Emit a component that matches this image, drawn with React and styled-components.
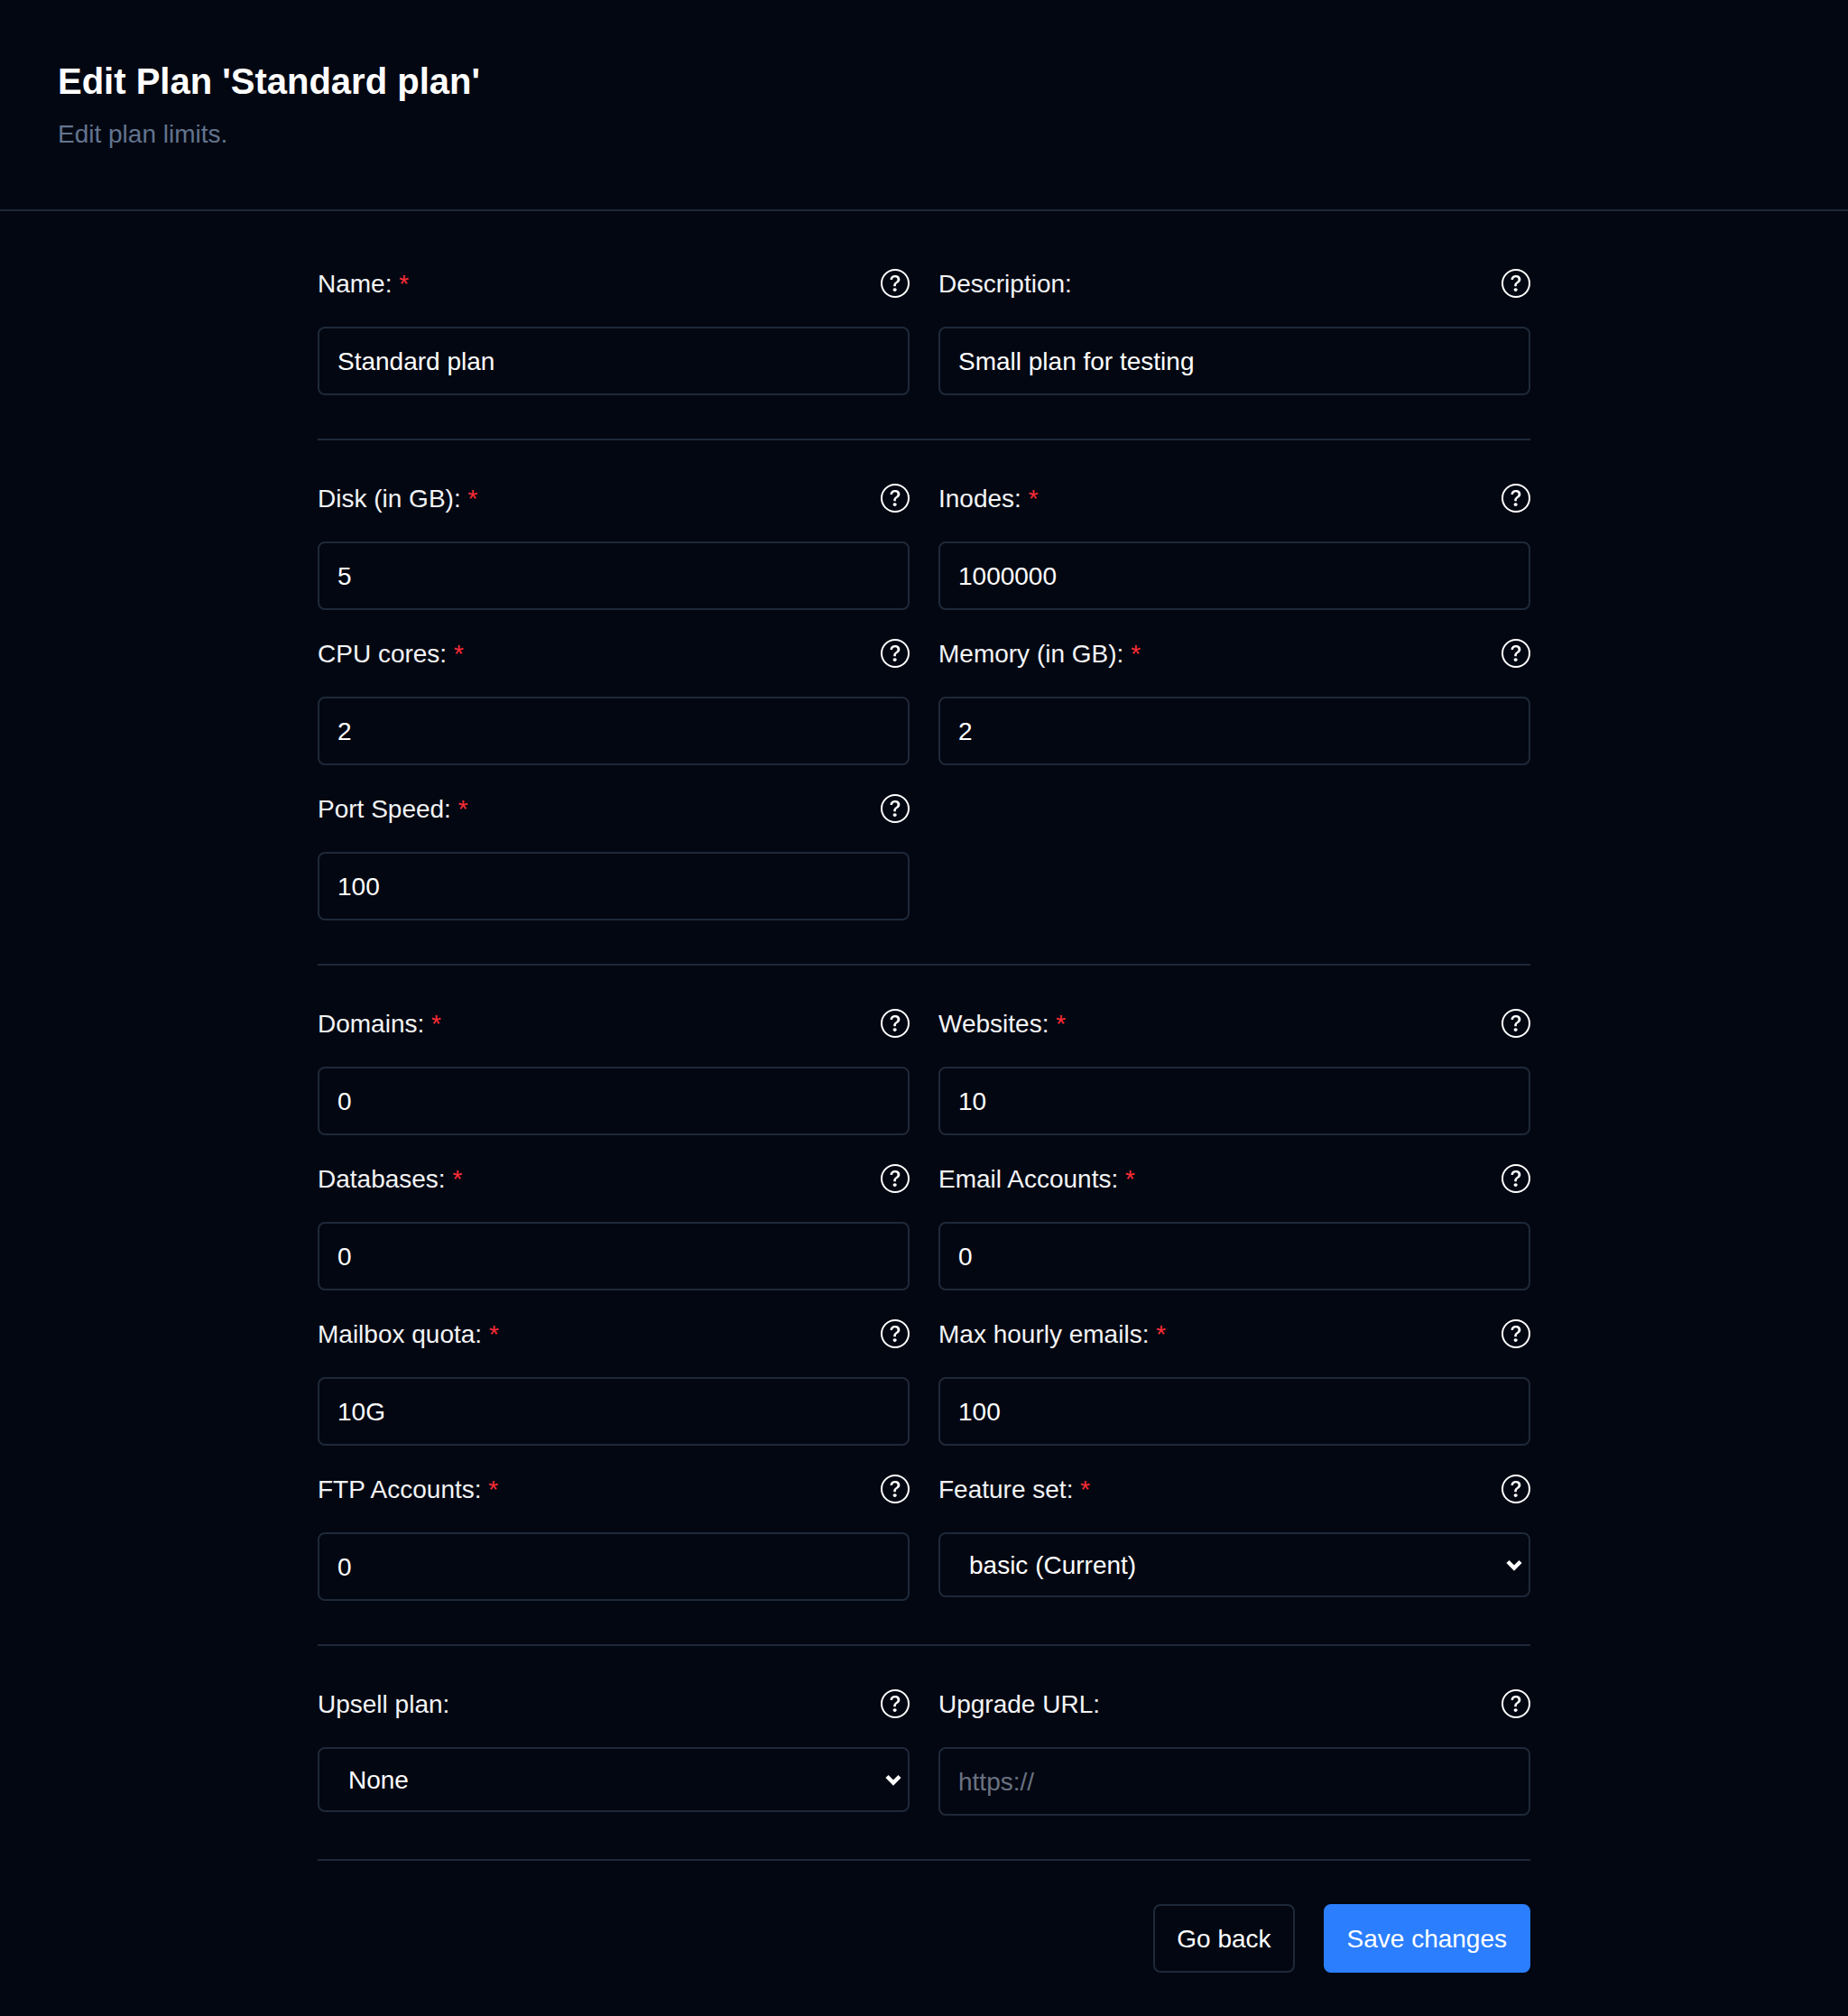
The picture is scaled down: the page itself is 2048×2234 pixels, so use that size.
import React from "react";
import styled, { createGlobalStyle } from "styled-components";
import { BsQuestionCircle } from "react-icons/bs";

const GlobalStyle = createGlobalStyle`
  html, body {
    margin: 0;
    padding: 0;
    background: #030712;
    color-scheme: dark;
  }
  * {
    box-sizing: border-box;
  }
`

const Page = styled.div`
  width: 2048px;
  min-height: 2234px;
  background: #030712;
  color: #fff;
  font-family: "Liberation Sans", Arial, sans-serif;
  font-size: 28px;
`

const Header = styled.header`
  height: 234px;
  padding: 64px 64px 0;
  border-bottom: 2px solid #1e2939;
`

const Title = styled.h1`
  margin: 0;
  font-size: 40px;
  line-height: 52px;
  font-weight: 700;
`

const Subtitle = styled.p`
  margin: 13px 0 0;
  font-size: 28px;
  line-height: 40px;
  color: #62748e;
`

const Form = styled.form`
  width: 1344px;
  margin: 0 auto;
  padding: 64px 0 48px;
`

const Section = styled.section`
  display: grid;
  grid-template-columns: 1fr 1fr;
  column-gap: 32px;
  row-gap: 32px;
`

const Divider = styled.hr`
  margin: 48px 0;
  border: none;
  border-top: 2px solid #1e2939;
`

const Field = styled.div`
  min-width: 0;
`

const LabelRow = styled.div`
  display: flex;
  justify-content: space-between;
  align-items: center;
  height: 32px;
  margin-bottom: 32px;
`

const Label = styled.label`
  padding-top: 2px;
  line-height: 40px;
  color: #f3f4f6;
`

const Required = styled.span`
  color: #fb2c36;
`

const HelpIcon = styled(BsQuestionCircle)`
  width: 32px;
  height: 32px;
  color: #fff;
  flex: none;
`

const TextInput = styled.input`
  display: block;
  width: 100%;
  height: 76px;
  padding: 2px 20px 0;
  background: transparent;
  border: 2px solid #1e2939;
  border-radius: 8px;
  color: #fff;
  font-family: inherit;
  font-size: 28px;
  outline: none;

  &::placeholder {
    color: #6a7282;
  }
`

const SelectWrap = styled.div`
  position: relative;
`

const Select = styled.select`
  display: block;
  width: 100%;
  height: 72px;
  padding: 0 32px;
  appearance: none;
  background: transparent;
  border: 2px solid #1e2939;
  border-radius: 8px;
  color: #fff;
  font-family: inherit;
  font-size: 28px;
  outline: none;
`

const Chevron = styled.svg`
  position: absolute;
  top: 30px;
  right: 9px;
  width: 18px;
  height: 13px;
  pointer-events: none;
`

const Actions = styled.div`
  display: flex;
  justify-content: flex-end;
  gap: 32px;
`

const Button = styled.button`
  height: 76px;
  padding: 2px 24px 0;
  border: 2px solid ${(p) => (p.$primary ? "#2b7fff" : "#1e2939")};
  border-radius: 8px;
  background: ${(p) => (p.$primary ? "#2b7fff" : "transparent")};
  color: #fff;
  font-family: inherit;
  font-size: 28px;
`

const sections = [
  [
    { label: "Name:", value: "Standard plan", required: true },
    { label: "Description:", value: "Small plan for testing" },
  ],
  [
    { label: "Disk (in GB):", value: "5", required: true },
    { label: "Inodes:", value: "1000000", required: true },
    { label: "CPU cores:", value: "2", required: true },
    { label: "Memory (in GB):", value: "2", required: true },
    { label: "Port Speed:", value: "100", required: true },
  ],
  [
    { label: "Domains:", value: "0", required: true },
    { label: "Websites:", value: "10", required: true },
    { label: "Databases:", value: "0", required: true },
    { label: "Email Accounts:", value: "0", required: true },
    { label: "Mailbox quota:", value: "10G", required: true },
    { label: "Max hourly emails:", value: "100", required: true },
    { label: "FTP Accounts:", value: "0", required: true },
    { label: "Feature set:", select: "basic (Current)", required: true },
  ],
  [
    { label: "Upsell plan:", select: "None" },
    { label: "Upgrade URL:", placeholder: "https://" },
  ],
];

function FormField({ label, value, required, select, placeholder }) {
  return (
    <Field>
      <LabelRow>
        <Label>
          {label}
          {required && <Required> *</Required>}
        </Label>
        <HelpIcon />
      </LabelRow>
      {select ? (
        <SelectWrap>
          <Select defaultValue={select}>
            <option>{select}</option>
          </Select>
          <Chevron viewBox="0 0 18 13">
            <path d="M2 2.5l7 7 7-7" fill="none" stroke="#fff" strokeWidth="4.5" />
          </Chevron>
        </SelectWrap>
      ) : (
        <TextInput defaultValue={value} placeholder={placeholder} />
      )}
    </Field>
  );
}

export default function App() {
  return (
    <Page>
      <GlobalStyle />
      <Header>
        <Title>Edit Plan 'Standard plan'</Title>
        <Subtitle>Edit plan limits.</Subtitle>
      </Header>
      <Form>
        {sections.map((fields, i) => (
          <React.Fragment key={i}>
            <Section>
              {fields.map((f) => (
                <FormField key={f.label} {...f} />
              ))}
            </Section>
            <Divider />
          </React.Fragment>
        ))}
        <Actions>
          <Button type="button">Go back</Button>
          <Button type="button" $primary>
            Save changes
          </Button>
        </Actions>
      </Form>
    </Page>
  );
}
